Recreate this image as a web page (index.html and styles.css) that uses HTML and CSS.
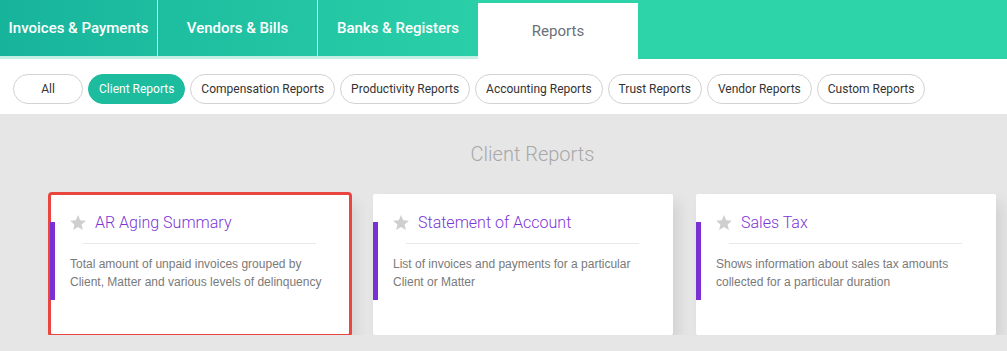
FILE: index.html
```html
<!DOCTYPE html>
<html lang="en">
<head>
  <meta charset="UTF-8" />
  <meta name="viewport" content="width=device-width, initial-scale=1.0"/>
  <title>Reports</title>
  <link rel="stylesheet" href="styles.css">
</head>
<body>
  <div class="tabbar">
    <div class="tab-group">
      <div class="tab">Invoices &amp; Payments</div>
      <div class="tab">Vendors &amp; Bills</div>
      <div class="tab">Banks &amp; Registers</div>
    </div>
    <div class="tab tab-active">Reports</div>
  </div>

  <div class="filters">
    <button class="pill pill-all">All</button>
    <button class="pill pill-active">Client Reports</button>
    <button class="pill">Compensation Reports</button>
    <button class="pill">Productivity Reports</button>
    <button class="pill">Accounting Reports</button>
    <button class="pill">Trust Reports</button>
    <button class="pill">Vendor Reports</button>
    <button class="pill">Custom Reports</button>
  </div>

  <div class="content">
    <div class="section-title">Client Reports</div>
    <div class="cards">
      <div class="card card-selected">
        <div class="card-head">
          <svg class="star" viewBox="2 2 20 19" width="16" height="15"><path d="M12 17.27L18.18 21l-1.64-7.03L22 9.24l-7.19-.61L12 2 9.19 8.63 2 9.24l5.46 4.73L5.82 21z"/></svg>
          <span class="card-title">AR Aging Summary</span>
        </div>
        <div class="divider"></div>
        <div class="card-desc">Total amount of unpaid invoices grouped by Client, Matter and various levels of delinquency</div>
      </div>
      <div class="card">
        <div class="card-head">
          <svg class="star" viewBox="2 2 20 19" width="16" height="15"><path d="M12 17.27L18.18 21l-1.64-7.03L22 9.24l-7.19-.61L12 2 9.19 8.63 2 9.24l5.46 4.73L5.82 21z"/></svg>
          <span class="card-title">Statement of Account</span>
        </div>
        <div class="divider"></div>
        <div class="card-desc">List of invoices and payments for a particular Client or Matter</div>
      </div>
      <div class="card">
        <div class="card-head">
          <svg class="star" viewBox="2 2 20 19" width="16" height="15"><path d="M12 17.27L18.18 21l-1.64-7.03L22 9.24l-7.19-.61L12 2 9.19 8.63 2 9.24l5.46 4.73L5.82 21z"/></svg>
          <span class="card-title">Sales Tax</span>
        </div>
        <div class="divider"></div>
        <div class="card-desc">Shows information about sales tax amounts collected for a particular duration</div>
      </div>
    </div>
  </div>
</body>
</html>
```

FILE: styles.css
```css
body {
  font-family: Roboto, "Liberation Sans", sans-serif;
  background-color: #e6e6e6;
  margin: 0;
  padding: 0;
  overflow: hidden;
}
.tabbar {
  display: flex;
  height: 59px;
  background-color: #2dd4a9;
}
.tab-group {
  display: flex;
  background: linear-gradient(to right, #17b49c, #2acfa8);
  border-bottom: 3px solid #c4efe4;
  height: 56px;
}
.tab {
  width: 159px;
  height: 56px;
  display: flex;
  align-items: center;
  justify-content: center;
  color: #fff;
  font-size: 15px;
  font-weight: 500;
  border-right: 1px solid rgba(255, 255, 255, 0.75);
}
.tab:first-child {
  width: 157px;
}
.tab:last-child {
  width: 160px;
  border-right: none;
}
.tab-active {
  width: 159px;
  height: 56px;
  margin-top: 3px;
  background-color: #fff;
  color: #6b6f78;
  font-weight: 400;
  border-right: 1px solid #c4efe4;
}
.filters {
  display: flex;
  gap: 5px;
  height: 55px;
  padding: 15px 0 0 13px;
  box-sizing: border-box;
  background-color: #fff;
}
.pill {
  height: 30px;
  padding: 0 10px;
  font-family: Roboto, sans-serif;
  font-size: 12px;
  color: #333;
  background-color: #fff;
  border: 1px solid #d2d2d2;
  border-radius: 15px;
}
.pill-all {
  width: 70px;
}
.pill-active {
  background-color: #1dbc9e;
  border-color: #1dbc9e;
  color: #fff;
}
.section-title {
  padding: 29px 0 0 58px;
  text-align: center;
  font-size: 20px;
  line-height: 22px;
  font-weight: 300;
  color: #a8a8a8;
}
.cards {
  display: flex;
  gap: 23px;
  padding: 29px 0 0 50px;
}
.card {
  position: relative;
  width: 300px;
  height: 141px;
  box-sizing: border-box;
  padding: 20px 20px 0 20px;
  background-color: #fff;
  border-radius: 2px;
  box-shadow: 6px 8px 14px rgba(0, 0, 0, 0.09);
}
.card::before {
  content: "";
  position: absolute;
  left: 0;
  top: 28px;
  width: 5px;
  height: 78px;
  background-color: #7a30d2;
}
.card-selected {
  outline: 3px solid #e8463f;
  outline-offset: -1px;
}
.card-head {
  display: flex;
  align-items: center;
  gap: 9px;
  height: 17px;
}
.star {
  fill: #cfcfcf;
  flex-shrink: 0;
}
.card-title {
  font-size: 16px;
  font-weight: 300;
  color: #7b35d6;
}
.divider {
  width: 233px;
  height: 1px;
  margin: 12px 0 0 13px;
  background-color: #e9e9e9;
}
.card-desc {
  margin-top: 11px;
  font-family: "Liberation Sans", Arial, sans-serif;
  font-size: 12px;
  line-height: 18px;
  color: #7a7a7a;
}
```
